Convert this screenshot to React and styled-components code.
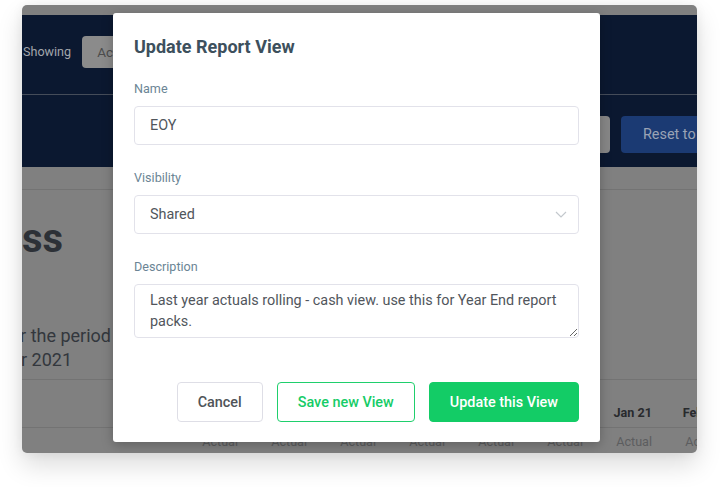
import styled, { createGlobalStyle } from 'styled-components';

const GlobalStyle = createGlobalStyle`
  html, body {
    margin: 0;
    padding: 0;
    background: #fff;
  }
  body {
    font-family: Roboto, "Liberation Sans", sans-serif;
  }
`;

const months = ['Jul 20', 'Aug 20', 'Sep 20', 'Oct 20', 'Nov 20', 'Dec 20', 'Jan 21', 'Feb 21'];

const Stage = styled.div`
  width: 720px;
  height: 487px;
  box-sizing: border-box;
  padding: 5px 23px 0 22px;
`;

const Frame = styled.div`
  position: relative;
  height: 448px;
  border-radius: 5px;
  overflow: hidden;
  background: #808080;
  box-shadow: 0 12px 26px rgba(0, 0, 0, 0.14), 0 0 12px rgba(0, 0, 0, 0.06);
  display: flex;
  flex-direction: column;
`;

const TopStrip = styled.div`
  height: 10px;
  flex-shrink: 0;
`;

const Header = styled.div`
  background: #0b1830;
  flex-shrink: 0;
`;

const HeaderRow = styled.div`
  display: flex;
  align-items: flex-start;
  gap: 11px;
  height: ${p => p.$h}px;
  box-sizing: border-box;
  padding: 21px 0 0 ${p => p.$pl}px;
  border-bottom: ${p => (p.$divider ? '1px solid #454c59' : 'none')};
  white-space: nowrap;
`;

const ShowingText = styled.span`
  font-size: 12.6px;
  line-height: 32px;
  color: #a2a6ac;
`;

const DimButton = styled.div`
  flex-shrink: 0;
  height: ${p => p.$h}px;
  width: ${p => (p.$w ? `${p.$w}px` : 'auto')};
  padding: 0 15px;
  box-sizing: border-box;
  border-radius: 4px;
  background: ${p => p.$bg};
  color: ${p => p.$fg};
  font-size: 13.5px;
  line-height: ${p => p.$h}px;
  text-align: ${p => (p.$w ? 'center' : 'left')};
`;

const BlueButton = styled.div`
  flex-shrink: 0;
  height: 37px;
  padding: 0 22px;
  border-radius: 4px;
  background: #1b3a73;
  color: #9aa3b5;
  font-size: 14.4px;
  line-height: 37px;
`;

const Content = styled.div`
  flex: 1;
  display: flex;
  flex-direction: column;
`;

const TabBar = styled.div`
  height: 22px;
  border-bottom: 1px solid #737373;
`;

const RightClip = styled.div`
  display: flex;
  justify-content: flex-end;
  width: ${p => p.$w}px;
  white-space: nowrap;
`;

const PageTitle = styled.h1`
  margin: 25px 0 0;
  font-size: 40px;
  line-height: 48px;
  font-weight: 700;
  color: #2d3137;
`;

const Intro = styled.div`
  margin-top: 61px;
  font-size: 18px;
  line-height: 24px;
  color: #33373d;
`;

const Table = styled.div`
  margin-top: 7px;
  border-top: 1px solid #737373;
  font-size: 12.6px;
  line-height: 16px;
`;

const TableRow = styled.div`
  display: flex;
  align-items: ${p => (p.$head ? 'flex-end' : 'flex-start')};
  height: ${p => p.$h}px;
  padding: ${p => (p.$head ? '0 0 6px' : '6px 0 0')};
  box-sizing: border-box;
  border-bottom: ${p => (p.$head ? '1px solid #737373' : 'none')};
  white-space: nowrap;
`;

const LabelCell = styled.div`
  width: 147px;
  flex-shrink: 0;
`;

const Cell = styled.div`
  width: 69px;
  flex-shrink: 0;
  text-align: right;
  font-weight: ${p => (p.$head ? 700 : 400)};
  color: ${p => (p.$head ? '#282a2d' : '#5c5d5f')};
`;

const Modal = styled.div`
  position: absolute;
  left: 91px;
  top: 8px;
  width: 487px;
  height: 429px;
  box-sizing: border-box;
  padding: 23px 21px 20px;
  background: #fff;
  border-radius: 3px;
  box-shadow: 0 3px 12px rgba(0, 0, 0, 0.25);
  display: flex;
  flex-direction: column;
`;

const ModalTitle = styled.h2`
  margin: 0 0 23px;
  font-size: 18px;
  line-height: 22px;
  font-weight: 700;
  color: #3d505d;
`;

const Field = styled.div`
  display: flex;
  flex-direction: column;
  margin-bottom: ${p => p.$mb}px;
`;

const Label = styled.label`
  font-size: 12.6px;
  line-height: 16px;
  color: #6b8595;
  margin-bottom: 9px;
`;

const controlBase = `
  box-sizing: border-box;
  width: 100%;
  border: 1px solid #e2e2ea;
  border-radius: 4px;
  background: #fff;
  font-family: Roboto, "Liberation Sans", sans-serif;
  font-size: 14.4px;
  color: #51565c;
  outline: none;
`;

const TextInput = styled.input`
  ${controlBase}
  height: 39px;
  padding: 0 15px;
`;

const SelectBox = styled.div`
  ${controlBase}
  height: 39px;
  padding: 0 11px 0 15px;
  display: flex;
  align-items: center;
  justify-content: space-between;
`;

const TextArea = styled.textarea`
  ${controlBase}
  height: 54px;
  padding: 5px 15px;
  line-height: 21px;
  resize: vertical;
`;

const Actions = styled.div`
  margin-top: auto;
  display: flex;
  justify-content: flex-end;
  gap: 14px;
`;

const Button = styled.button`
  height: 40px;
  padding: 0 20px;
  box-sizing: border-box;
  border-radius: 4px;
  font-family: Roboto, "Liberation Sans", sans-serif;
  font-size: 14.4px;
  font-weight: 500;
  cursor: pointer;
  border: 1px solid ${p => (p.$variant === 'default' ? '#dedee6' : '#1fcf6c')};
  background: ${p => (p.$variant === 'primary' ? '#13cc66' : '#fff')};
  color: ${p => (p.$variant === 'primary' ? '#fff' : p.$variant === 'outline' ? '#16cc67' : '#505458')};
  border-color: ${p => (p.$variant === 'primary' ? '#13cc66' : undefined)};
`;

function Chevron() {
  return (
    <svg width="12" height="7" viewBox="0 0 12 7">
      <polyline points="1,1 6,6 11,1" fill="none" stroke="#c3c8cd" strokeWidth="1.2" />
    </svg>
  );
}

export default function App() {
  return (
    <>
      <GlobalStyle />
      <Stage>
        <Frame>
          <TopStrip />
          <Header>
            <HeaderRow $h={80} $pl={1} $divider>
              <ShowingText>Showing</ShowingText>
              <DimButton $h={32} $bg="#8b8b8b" $fg="#4d4d4d">Actuals</DimButton>
            </HeaderRow>
            <HeaderRow $h={72} $pl={478}>
              <DimButton $h={37} $w={110} $bg="#878787" $fg="#4d4d4d">Save view</DimButton>
              <BlueButton>Reset to default</BlueButton>
            </HeaderRow>
          </Header>
          <Content>
            <TabBar />
            <RightClip $w={41}>
              <PageTitle>Profit &amp; Loss</PageTitle>
            </RightClip>
            <Intro>
              <RightClip $w={89}>Figures shown are for the period</RightClip>
              <RightClip $w={50}>1 January 2020 to 31 December 2021</RightClip>
            </Intro>
            <Table>
              <TableRow $head $h={48}>
                <LabelCell />
                {months.map(m => (
                  <Cell key={m} $head>{m}</Cell>
                ))}
              </TableRow>
              <TableRow $h={30}>
                <LabelCell />
                {months.map(m => (
                  <Cell key={m}>Actual</Cell>
                ))}
              </TableRow>
            </Table>
          </Content>

          <Modal>
            <ModalTitle>Update Report View</ModalTitle>
            <Field $mb={25}>
              <Label>Name</Label>
              <TextInput defaultValue="EOY" />
            </Field>
            <Field $mb={25}>
              <Label>Visibility</Label>
              <SelectBox>
                <span>Shared</span>
                <Chevron />
              </SelectBox>
            </Field>
            <Field $mb={0}>
              <Label>Description</Label>
              <TextArea defaultValue="Last year actuals rolling - cash view. use this for Year End report packs." />
            </Field>
            <Actions>
              <Button $variant="default">Cancel</Button>
              <Button $variant="outline">Save new View</Button>
              <Button $variant="primary">Update this View</Button>
            </Actions>
          </Modal>
        </Frame>
      </Stage>
    </>
  );
}
